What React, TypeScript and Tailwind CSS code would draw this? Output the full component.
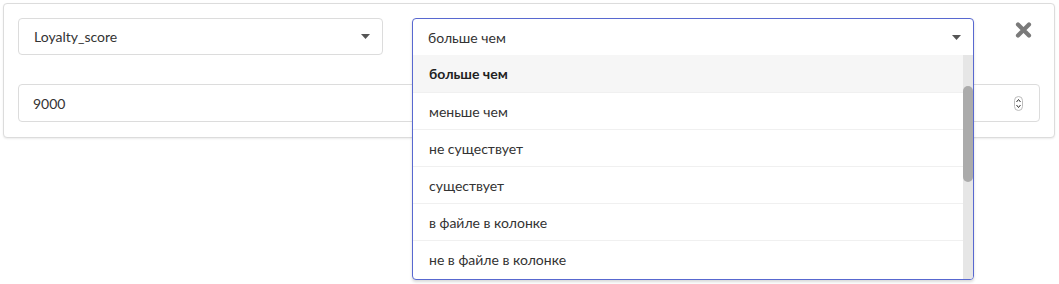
import React from "react";

const font = { fontFamily: "Lato, 'Noto Sans', sans-serif" };

function Caret() {
  return (
    <svg width="9" height="5" viewBox="0 0 9 5" className="block">
      <path d="M0 0 L9 0 L4.5 5 Z" fill="#555" />
    </svg>
  );
}

const options = [
  "больше чем",
  "меньше чем",
  "не существует",
  "существует",
  "в файле в колонке",
  "не в файле в колонке",
];

export default function App() {
  return (
    <div className="w-[1059px] h-[284px] bg-white text-[14px] text-[#333]" style={font}>
      <div className="pt-[3px] pl-[3px] pr-[4px]">
        <div className="relative rounded-[4px] border border-[#dcdcdc] shadow-[0_1px_2px_rgba(0,0,0,0.08)] bg-white pt-[14px] pl-[14px] pr-[14px] pb-[15px]">
          <div className="flex items-start">
            <div className="w-[365px] h-[37px] rounded-[4px] border border-[#dcdcdc] flex items-center justify-between pl-[15px] pr-[12px]">
              <span>Loyalty_score</span>
              <Caret />
            </div>
            <div className="relative ml-[29px] w-[562px] h-[37px]">
              <div className="absolute left-0 top-0 w-[562px] h-[262px] z-10 rounded-[4px] border border-[#5868d0] bg-white shadow-[0_2px_3px_rgba(0,0,0,0.15)] overflow-hidden flex flex-col">
                <div className="h-[36px] shrink-0 flex items-center justify-between pl-[15px] pr-[12px]">
                  <span>больше чем</span>
                  <Caret />
                </div>
                <div className="flex flex-1">
                  <div className="flex-1 flex flex-col">
                    {options.map((o, i) => (
                      <div
                        key={o}
                        className={
                          i === 0
                            ? "h-[37px] flex items-center pl-[16px] bg-[#f6f6f6] font-bold text-[#222]"
                            : "h-[37px] flex items-center pl-[16px] border-t border-[#f0f0f0]"
                        }
                      >
                        {o}
                      </div>
                    ))}
                  </div>
                  <div className="w-[10px] bg-[#e6e6e6] pt-[31px]">
                    <div className="h-[96px] rounded-full bg-[#ababab]" />
                  </div>
                </div>
              </div>
            </div>
            <div className="flex-1 flex justify-end pr-[8px] pt-[4px]">
              <svg width="17" height="16" viewBox="0 0 17 16">
                <path d="M3 2.5 L14 13.5 M14 2.5 L3 13.5" stroke="#7a7a7a" strokeWidth="4.2" strokeLinecap="round" />
              </svg>
            </div>
          </div>
          <div className="mt-[29px] w-[1022px] h-[38px] rounded-[4px] border border-[#dcdcdc] flex items-center justify-between pl-[14px] pr-[16px]">
            <span>9000</span>
            <svg width="9" height="15" viewBox="0 0 9 15">
              <rect x="0.5" y="0.5" width="8" height="14" rx="4" fill="#fff" stroke="#bbb" />
              <path d="M2.5 6 L4.5 3.5 L6.5 6" stroke="#333" strokeWidth="1" fill="none" />
              <path d="M2.5 9 L4.5 11.5 L6.5 9" stroke="#333" strokeWidth="1" fill="none" />
            </svg>
          </div>
        </div>
      </div>
    </div>
  );
}
